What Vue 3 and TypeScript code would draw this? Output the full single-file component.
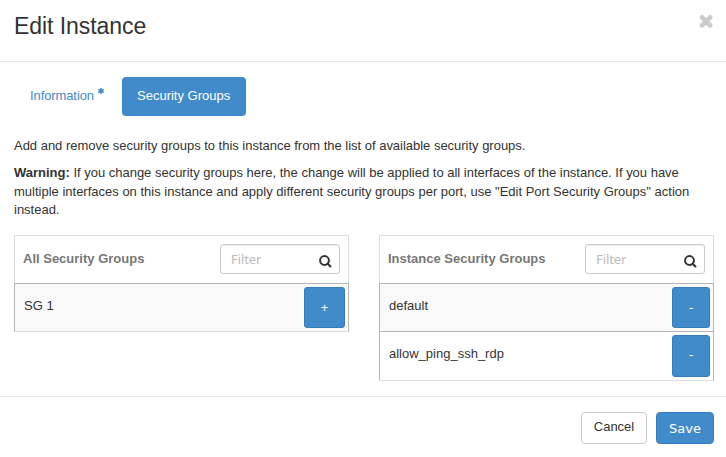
<script setup lang="ts">
interface GroupTable {
  title: string
  action: string
  rows: string[]
}

const tables: GroupTable[] = [
  { title: 'All Security Groups', action: '+', rows: ['SG 1'] },
  { title: 'Instance Security Groups', action: '-', rows: ['default', 'allow_ping_ssh_rdp'] },
]
</script>

<template>
  <div class="modal">
    <header class="head">
      <h3>Edit Instance</h3>
      <button class="close" aria-label="Close">
        <svg width="14" height="14" viewBox="0 0 14 14">
          <path d="M3.1 3.4 L11.1 11.4 M11.1 3.4 L3.1 11.4" stroke="#ccc" stroke-width="4.8" stroke-linecap="round" />
        </svg>
      </button>
    </header>
    <main class="body">
      <nav class="tabs">
        <a class="tab info">
          <span>Information</span>
          <svg class="star" width="6" height="6" viewBox="0 0 6 6">
            <path d="M3 0V6M0.2 1.5L5.8 4.5M5.8 1.5L0.2 4.5" stroke="#428bca" stroke-width="1.6" />
          </svg>
        </a>
        <a class="tab active">Security Groups</a>
      </nav>
      <p class="intro">Add and remove security groups to this instance from the list of available security groups.</p>
      <p class="warn">
        <b>Warning:</b> If you change security groups here, the change will be applied to all interfaces of the instance. If you have<br />
        <span class="middle">multiple interfaces on this instance and apply different security groups per port, use "Edit Port Security Groups" action</span><br />
        instead.
      </p>
      <div class="columns">
        <section v-for="t in tables" :key="t.title" class="table">
          <div class="thead">
            <span class="title">{{ t.title }}</span>
            <div class="filter">
              <span>Filter</span>
              <svg width="13" height="13" viewBox="0 0 13 13" fill="none" stroke="#333">
                <circle cx="5.5" cy="5.5" r="4.4" stroke-width="2" />
                <path d="M8.7 8.7L11.4 11.4" stroke-width="2.1" stroke-linecap="round" />
              </svg>
            </div>
          </div>
          <div class="rows">
            <div v-for="r in t.rows" :key="r" class="row">
              <span>{{ r }}</span>
              <button class="btn act" :class="{ plus: t.action === '+' }">{{ t.action }}</button>
            </div>
          </div>
        </section>
      </div>
    </main>
    <footer class="foot">
      <button class="btn cancel">Cancel</button>
      <button class="btn save">Save</button>
    </footer>
  </div>
</template>

<style>
body {
  margin: 0;
  background: #fff;
}
</style>

<style scoped>
* {
  box-sizing: border-box;
}
.modal {
  width: 726px;
  height: 457px;
  overflow: hidden;
  background: #fff;
  color: #333;
  font: 13px/18.57px "Liberation Sans", Arial, sans-serif;
}
.head {
  display: flex;
  justify-content: space-between;
  height: 62px;
  padding: 14px 13px 0 14px;
  border-bottom: 1px solid #e5e5e5;
}
h3 {
  margin: 0;
  font-size: 23px;
  font-weight: 400;
  line-height: 25px;
  letter-spacing: -0.06px;
}
.close {
  width: 14px;
  height: 14px;
  padding: 0;
  border: 0;
  background: none;
}
.close svg {
  display: block;
}
.body {
  height: 334px;
  padding: 15px 12px 0 14px;
}
.tabs {
  display: flex;
  gap: 2px;
  height: 39px;
}
.tab {
  display: flex;
  padding: 10px 15px;
  border-radius: 4px;
  color: #428bca;
  white-space: nowrap;
}
.info {
  width: 106px;
  padding-left: 16px;
  gap: 4px;
}
.info span {
  letter-spacing: -0.1px;
}
.star {
  flex: none;
  margin-top: 1px;
}
.active {
  width: 124px;
  background: #428bca;
  color: #fff;
}
p {
  margin: 0;
  white-space: nowrap;
}
.intro {
  margin-top: 21px;
  letter-spacing: -0.018px;
}
.warn {
  margin-top: 8.6px;
  letter-spacing: -0.008px;
}
.middle {
  letter-spacing: 0;
}
.columns {
  display: grid;
  grid-template-columns: 335px 335px;
  gap: 30px;
  align-items: start;
  margin-top: 15.4px;
}
.thead {
  display: flex;
  justify-content: space-between;
  height: 48px;
  padding: 8px 8px 0;
  border: 1px solid #ddd;
  border-bottom: 0;
}
.title {
  padding-top: 6px;
  color: #777;
  font-weight: 700;
}
.filter {
  display: flex;
  justify-content: space-between;
  width: 120px;
  height: 30px;
  padding: 5px 7px 0 10px;
  border: 1px solid #ccc;
  border-radius: 3px;
  box-shadow: inset 0 1px 1px rgba(0, 0, 0, 0.075);
  color: #bbb;
  font-family: "Noto Sans", sans-serif;
  letter-spacing: -0.1px;
}
.filter svg {
  margin-top: 5px;
}
.rows {
  border: 1px solid #b5b5b5;
  border-bottom-color: #ddd;
}
.row {
  display: flex;
  justify-content: space-between;
  height: 47px;
  padding: 3px 3px 0 9px;
  background: #f9f9f9;
}
.row > span {
  padding-top: 10px;
}
.row + .row {
  height: 49px;
  border-top: 1px solid #b5b5b5;
  background: #fff;
}
.btn {
  padding: 0;
  border: 1px solid #357ebd;
  border-radius: 4px;
  background: #428bca;
  color: #fff;
  font: 13px/18px "Liberation Sans", sans-serif;
}
.act {
  width: 38px;
  height: 41px;
  padding-bottom: 2px;
  border-radius: 3px;
  font-family: "Noto Sans", sans-serif;
}
.row + .row .act {
  height: 42px;
  padding-bottom: 4px;
}
.plus {
  width: 41px;
}
.foot {
  display: flex;
  justify-content: flex-end;
  gap: 9px;
  padding: 15px 12px 0;
  border-top: 1px solid #e5e5e5;
}
.cancel {
  width: 66px;
  height: 32px;
  padding-bottom: 3px;
  border-color: #ccc;
  background: #fff;
  color: #333;
}
.save {
  width: 58px;
  height: 32px;
  padding-top: 2px;
  font-family: "DejaVu Sans", sans-serif;
}
</style>
